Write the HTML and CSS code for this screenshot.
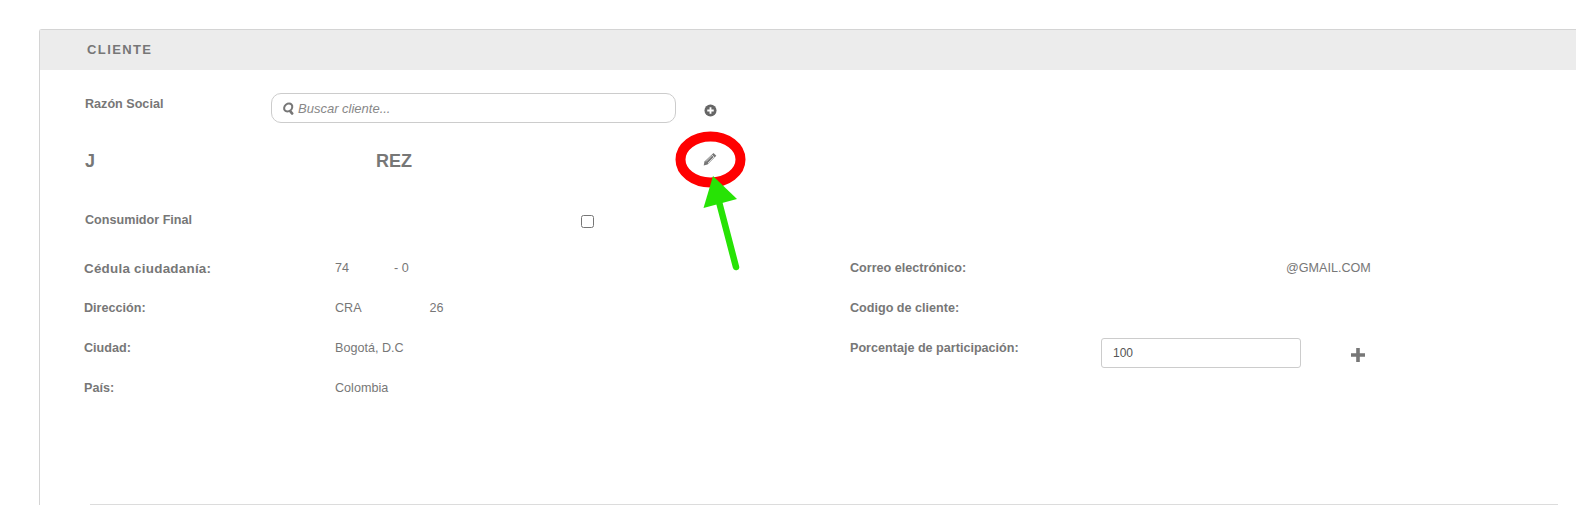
FILE: index.html
```html
<!DOCTYPE html>
<html lang="en">
<head>
    <meta charset="UTF-8">
    <title>Cliente</title>
    <link rel="stylesheet" href="styles.css">
</head>
<body>

<div class="panel">
    <div class="panelHeader">CLIENTE</div>

    <div class="searchRow">
        <label class="rowLabel">Razón Social</label>
        <div class="searchBox">
            <svg class="searchIcon" viewBox="0 0 14 14" width="13" height="13">
                <circle cx="6.500" cy="6" r="4.300" fill="none" stroke="#777" stroke-width="2.200"/>
                <path d="M9 9.500l3 3" stroke="#777" stroke-width="2.600" stroke-linecap="round"/>
            </svg>
            <span class="searchText">Buscar cliente...</span>
        </div>
        <svg class="addIcon" viewBox="0 0 14 14" width="13" height="13">
            <circle cx="7" cy="7" r="6.500" fill="#666"/>
            <path d="M7 3.500v7M3.500 7h7" stroke="#fff" stroke-width="2"/>
        </svg>
    </div>

    <div class="nameRow">
        <span class="namePart">J</span>
        <span class="nameEnd">REZ</span>
        <svg class="editIcon" viewBox="0 0 14 14" width="14" height="14">
            <path d="M10.500 1l2.800 2.800-8.800 8.800-3.800 .8 .8-3.800z" fill="#777"/>
            <path d="M8.700 2.800l2.800 2.800M3 9.500l6-6M5 11l6-6" stroke="#fff" stroke-width="0.700"/>
        </svg>
    </div>

    <div class="finalRow">
        <label class="rowLabel">Consumidor Final</label>
        <input type="checkbox" class="finalCheck">
    </div>

    <div class="details">
        <div class="detailColumn">
            <div class="detailRow">
                <span class="detailLabel wide">Cédula ciudadanía:</span>
                <span class="detailValue">74<span class="numberEnd">- 0</span></span>
            </div>
            <div class="detailRow">
                <span class="detailLabel">Dirección:</span>
                <span class="detailValue">CRA<span class="addressEnd">26</span></span>
            </div>
            <div class="detailRow">
                <span class="detailLabel">Ciudad:</span>
                <span class="detailValue">Bogotá, D.C</span>
            </div>
            <div class="detailRow">
                <span class="detailLabel">País:</span>
                <span class="detailValue">Colombia</span>
            </div>
        </div>

        <div class="detailColumn rightColumn">
            <div class="detailRow">
                <span class="detailLabel">Correo electrónico:</span>
                <span class="detailValue mailValue">@GMAIL.COM</span>
            </div>
            <div class="detailRow">
                <span class="detailLabel">Codigo de cliente:</span>
            </div>
            <div class="detailRow">
                <span class="detailLabel">Porcentaje de participación:</span>
                <input type="text" class="percentInput" value="100">
                <svg class="plusIcon" viewBox="0 0 14 14" width="14" height="14">
                    <path d="M7 0v14M0 7h14" stroke="#777" stroke-width="3.600"/>
                </svg>
            </div>
        </div>
    </div>

    <div class="panelLine"></div>
</div>

<!-- annotation drawn over the screenshot -->
<svg class="marks" viewBox="0 0 1596 525" width="1596" height="525">
    <ellipse cx="710.500" cy="159.500" rx="30" ry="23" fill="none" stroke="#ff0000" stroke-width="10"/>
    <path d="M736 267L718 198" stroke="#27e305" stroke-width="6.500" stroke-linecap="round"/>
    <path d="M713 176L737 199 703.500 208z" fill="#27e305"/>
</svg>

</body>
</html>
```

FILE: styles.css
```css
/* Global Styles */
body {
    margin: 0;
    height: 525px;
    overflow: hidden;
    background: #fff;
    font-family: "Liberation Sans", Arial, sans-serif;
    font-size: 12.6px;
    color: #777;
}

/* Panel */
.panel {
    margin: 29px 20px 0 39px;
    height: 475px;
    border-left: 1px solid #d4d4d4;
    border-top: 1px solid #d4d4d4;
    border-top-left-radius: 3px;
    position: relative;
}

.panelHeader {
    height: 40px;
    line-height: 39px;
    padding-left: 47px;
    background: #ececec;
    font-size: 13px;
    font-weight: bold;
    letter-spacing: 1.4px;
}

/* Search row */
.searchRow {
    display: flex;
    height: 30px;
    margin-top: 23px;
    padding-left: 45px;
}

.rowLabel {
    font-weight: bold;
    width: 186px;
}

.searchRow .rowLabel {
    line-height: 22px;
}

.searchBox {
    display: flex;
    align-items: center;
    gap: 3px;
    box-sizing: border-box;
    width: 405px;
    height: 30px;
    padding-left: 10px;
    border: 1px solid #ccc;
    border-radius: 10px;
}

.searchIcon {
    transform: skewX(-10deg);
}

.searchText {
    font-size: 13px;
    font-style: italic;
    color: #888;
}

.addIcon {
    margin: 11px 0 0 28px;
}

/* Name row */
.nameRow {
    display: flex;
    align-items: center;
    height: 24px;
    margin-top: 26px;
    padding-left: 45px;
    font-size: 18px;
    font-weight: bold;
}

.namePart {
    width: 12px;
}

.nameEnd {
    margin-left: 279px;
}

.editIcon {
    margin: -4px 0 0 291px;
}

/* Consumidor final */
.finalRow {
    display: flex;
    align-items: center;
    height: 20px;
    margin-top: 37px;
    padding-left: 45px;
}

.finalRow .rowLabel {
    width: 496px;
}

.finalCheck {
    width: 13px;
    height: 13px;
    margin: 2px 0 0;
}

/* Detail columns */
.details {
    display: flex;
    margin-top: 31px;
    padding-left: 44px;
}

.detailColumn {
    width: 766px;
}

.rightColumn {
    width: 560px;
}

.detailRow {
    display: flex;
    height: 40px;
}

.detailLabel {
    width: 251px;
    font-weight: bold;
}

.wide {
    font-size: 13.4px;
    letter-spacing: 0.25px;
}

.detailValue {
    white-space: nowrap;
}

.numberEnd {
    margin-left: 45px;
}

.addressEnd {
    margin-left: 68px;
}

.mailValue {
    margin-left: 185px;
}

.percentInput {
    box-sizing: border-box;
    width: 200px;
    height: 30px;
    margin: -3px 0 0 0;
    padding: 0 11px;
    border: 1px solid #ccc;
    border-radius: 3px;
    font-family: inherit;
    font-size: 12px;
    color: #555;
}

.plusIcon {
    margin: 7px 0 0 50px;
}

.panelLine {
    position: absolute;
    left: 50px;
    right: 18px;
    bottom: 0;
    height: 1px;
    background: #dcdcdc;
}

/* Red ring and green arrow */
.marks {
    position: absolute;
    left: 0;
    top: 0;
}
```
